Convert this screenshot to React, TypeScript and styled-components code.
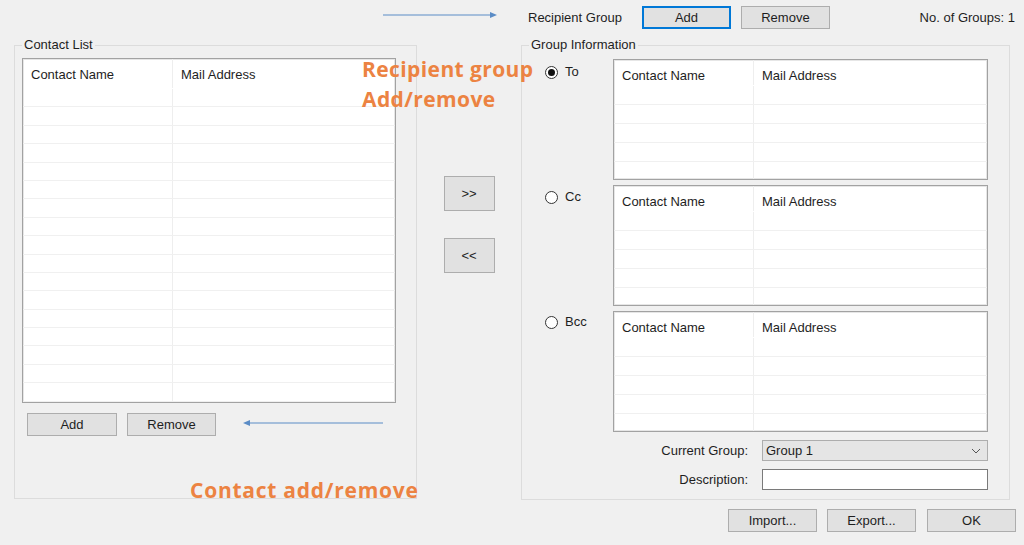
import styled, { createGlobalStyle } from "styled-components";

const GlobalStyle = createGlobalStyle`
  html, body {
    margin: 0;
    padding: 0;
    background: #f0f0f0;
  }
  body {
    font-family: "Liberation Sans", Arial, sans-serif;
    font-size: 13px;
    color: #1e1e1e;
  }
`;

const Window = styled.div`
  position: relative;
  width: 1024px;
  height: 545px;
  overflow: hidden;
  display: flex;
  flex-direction: column;
  background: #f0f0f0;
`;

const TopBar = styled.div`
  height: 35px;
  box-sizing: border-box;
  display: flex;
  align-items: center;
  padding: 0 9px 0 528px;
`;

const Label = styled.span<{ $gap?: number }>`
  white-space: nowrap;
  margin-right: ${(p) => p.$gap ?? 0}px;
`;

const Spacer = styled.div`
  flex: 1;
`;

const Button = styled.button<{ $w?: number; $h?: number; $focused?: boolean }>`
  width: ${(p) => p.$w ?? 89}px;
  height: ${(p) => p.$h ?? 23}px;
  box-sizing: border-box;
  padding: 0;
  background: #e1e1e1;
  border: 1px solid ${(p) => (p.$focused ? "#0078d7" : "#adadad")};
  box-shadow: ${(p) => (p.$focused ? "inset 0 0 0 1px #0078d7" : "none")};
  font-family: "Liberation Sans", Arial, sans-serif;
  font-size: 13px;
  color: #1e1e1e;
  flex-shrink: 0;
`;

const Main = styled.div`
  display: flex;
  height: 466px;
`;

const GroupBox = styled.fieldset<{ $w: number; $h: number; $left?: number }>`
  margin: 2px 0 0 ${(p) => p.$left ?? 0}px;
  width: ${(p) => p.$w}px;
  height: ${(p) => p.$h}px;
  min-width: 0;
  box-sizing: border-box;
  border: 1px solid #dcdcdc;
  padding: 5px 0 0 7px;
  display: flex;
  flex-direction: column;
`;

const Legend = styled.legend`
  padding: 0 2px;
  line-height: 16px;
  font-size: 13px;
`;

const ListBox = styled.div<{ $w: number; $h: number }>`
  width: ${(p) => p.$w}px;
  height: ${(p) => p.$h}px;
  box-sizing: border-box;
  background: #fff;
  border: 1px solid #a2a2a2;
  box-shadow: inset 0 0 0 1px #e6e6e6;
  overflow: hidden;
  flex-shrink: 0;
`;

const ListRow = styled.div<{ $col: number; $h: number; $line?: boolean }>`
  display: grid;
  grid-template-columns: ${(p) => p.$col}px 1fr;
  height: ${(p) => p.$h}px;
  box-sizing: border-box;
  border-bottom: 1px solid ${(p) => (p.$line ? "#f0f0f0" : "transparent")};
`;

const Cell = styled.div<{ $divider?: boolean }>`
  padding: 8px 0 0 8px;
  white-space: nowrap;
  border-right: 1px solid ${(p) => (p.$divider ? "#eeeeee" : "transparent")};
`;

const ButtonRow = styled.div<{ $top: number; $left: number }>`
  display: flex;
  gap: 10px;
  margin: ${(p) => p.$top}px 0 0 ${(p) => p.$left}px;
`;

const MiddleColumn = styled.div`
  width: 104px;
  display: flex;
  flex-direction: column;
  align-items: center;
  padding-top: 141px;
  gap: 27px;
`;

const RecipientRow = styled.div`
  display: flex;
  margin-bottom: 5px;
`;

const RadioSlot = styled.label<{ $top: number }>`
  width: 84px;
  box-sizing: border-box;
  padding: ${(p) => p.$top}px 0 0 16px;
  display: flex;
  align-items: flex-start;
  gap: 7px;
  height: 20px;
  line-height: 14px;
`;

const RadioDot = styled.span<{ $checked?: boolean }>`
  width: 13px;
  height: 13px;
  box-sizing: border-box;
  border-radius: 50%;
  border: 1px solid #333;
  background: #fff;
  display: flex;
  align-items: center;
  justify-content: center;
  margin-top: 1px;

  &::after {
    content: "";
    width: 7px;
    height: 7px;
    border-radius: 50%;
    background: #111;
    display: ${(p) => (p.$checked ? "block" : "none")};
  }
`;

const FieldRow = styled.div<{ $top: number }>`
  display: flex;
  align-items: center;
  margin-top: ${(p) => p.$top}px;
`;

const FieldLabel = styled.span`
  width: 219px;
  text-align: right;
  margin-right: 14px;
  white-space: nowrap;
`;

const Combo = styled.div`
  width: 226px;
  height: 21px;
  box-sizing: border-box;
  background: #e5e5e5;
  border: 1px solid #adadad;
  display: flex;
  align-items: center;
  justify-content: space-between;
  padding: 0 6px 0 3px;
`;

const TextBox = styled.div`
  width: 226px;
  height: 21px;
  box-sizing: border-box;
  background: #fff;
  border: 1px solid #7a7a7a;
`;

const BottomBar = styled.div`
  display: flex;
  justify-content: flex-end;
  gap: 10px;
  padding: 8px 8px 0 0;
`;

const Note = styled.div<{ $x: number; $y: number; $spacing?: number }>`
  position: absolute;
  left: ${(p) => p.$x}px;
  top: ${(p) => p.$y}px;
  font-family: "Open Sans", "Noto Sans", sans-serif;
  font-weight: 700;
  font-size: 21px;
  line-height: 30px;
  color: #ec8342;
  white-space: nowrap;
  letter-spacing: ${(p) => p.$spacing ?? 0.4}px;
`;

const ArrowSvg = styled.svg<{ $x: number; $y: number }>`
  position: absolute;
  left: ${(p) => p.$x}px;
  top: ${(p) => p.$y}px;
`;

type ListProps = { w: number; h: number; col: number; header: number; row: number };

const ListView = ({ w, h, col, header, row }: ListProps) => {
  const count = Math.ceil((h - header) / row);
  return (
    <ListBox $w={w} $h={h}>
      <ListRow $col={col} $h={header}>
        <Cell $divider>Contact Name</Cell>
        <Cell>Mail Address</Cell>
      </ListRow>
      {Array.from({ length: count }).map((_, i) => (
        <ListRow key={i} $col={col} $h={row} $line>
          <Cell $divider />
          <Cell />
        </ListRow>
      ))}
    </ListBox>
  );
};

// annotation arrow, x/y is the tail end, len is the length incl. head
const Arrow = ({ x, y, len, left }: { x: number; y: number; len: number; left?: boolean }) => (
  <ArrowSvg
    $x={left ? x - len : x}
    $y={y - 5}
    width={len}
    height="10"
    viewBox={`0 0 ${len} 10`}
  >
    {left ? (
      <>
        <line x1="6" y1="5" x2={len} y2="5" stroke="#5b8cc6" strokeWidth="1.2" />
        <polygon points="0,5 7,2 7,8" fill="#5b8cc6" />
      </>
    ) : (
      <>
        <line x1="0" y1="5" x2={len - 6} y2="5" stroke="#5b8cc6" strokeWidth="1.2" />
        <polygon points={`${len},5 ${len - 7},2 ${len - 7},8`} fill="#5b8cc6" />
      </>
    )}
  </ArrowSvg>
);

const recipients = [
  { name: "To", checked: true, top: 6 },
  { name: "Cc", checked: false, top: 5 },
  { name: "Bcc", checked: false, top: 4 },
];

export default function App() {
  return (
    <Window>
      <GlobalStyle />
      <TopBar>
        <Label $gap={20}>Recipient Group</Label>
        <Button $focused>Add</Button>
        <Button style={{ marginLeft: 10 }}>Remove</Button>
        <Spacer />
        <Label>No. of Groups: 1</Label>
      </TopBar>

      <Main>
        <GroupBox $w={403} $h={462} $left={14}>
          <Legend>Contact List</Legend>
          <ListView w={374} h={345} col={150} header={30} row={18.4} />
          <ButtonRow $top={10} $left={5}>
            <Button $w={90}>Add</Button>
            <Button>Remove</Button>
          </ButtonRow>
        </GroupBox>

        <MiddleColumn>
          <Button $w={51} $h={35}>&gt;&gt;</Button>
          <Button $w={51} $h={35}>&lt;&lt;</Button>
        </MiddleColumn>

        <GroupBox $w={489} $h={463}>
          <Legend>Group Information</Legend>
          <div style={{ height: 1 }} />
          {recipients.map((r) => (
            <RecipientRow key={r.name}>
              <RadioSlot $top={r.top}>
                <RadioDot $checked={r.checked} />
                {r.name}
              </RadioSlot>
              <ListView w={375} h={121} col={140} header={26} row={19} />
            </RecipientRow>
          ))}
          <FieldRow $top={3}>
            <FieldLabel>Current Group:</FieldLabel>
            <Combo>
              <span>Group 1</span>
              <svg width="10" height="6" viewBox="0 0 10 6">
                <polyline points="1,1 5,5 9,1" fill="none" stroke="#555" strokeWidth="1" />
              </svg>
            </Combo>
          </FieldRow>
          <FieldRow $top={8}>
            <FieldLabel>Description:</FieldLabel>
            <TextBox />
          </FieldRow>
        </GroupBox>
      </Main>

      <BottomBar>
        <Button>Import...</Button>
        <Button>Export...</Button>
        <Button style={{ marginLeft: 1 }}>OK</Button>
      </BottomBar>

      <Arrow x={383} y={15} len={114} />
      <Arrow x={383} y={423} len={140} left />
      <Note $x={362} $y={54}>
        Recipient group
        <br />
        Add/remove
      </Note>
      <Note $x={190} $y={475} $spacing={0.75}>
        Contact add/remove
      </Note>
    </Window>
  );
}
